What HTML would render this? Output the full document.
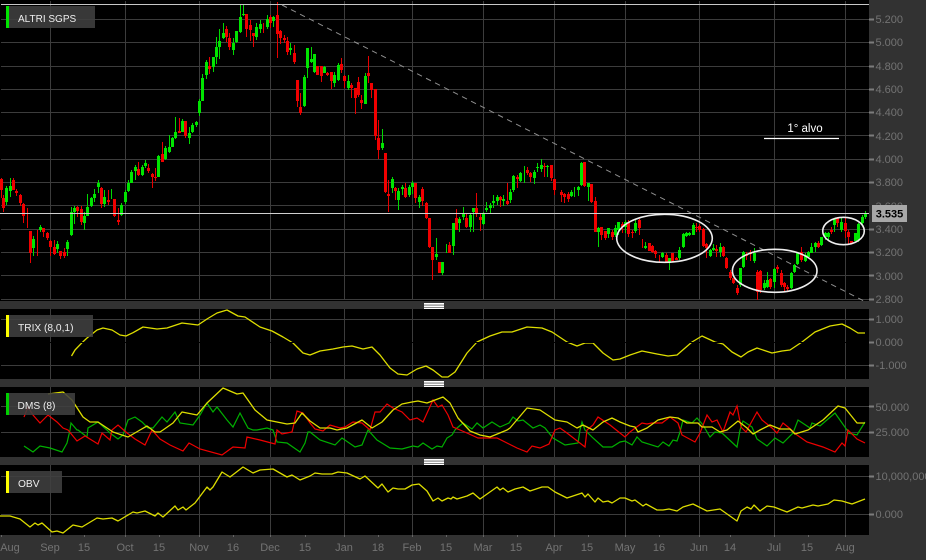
<!DOCTYPE html>
<html><head><meta charset="utf-8"><title>ALTRI SGPS</title>
<style>
html,body{margin:0;padding:0;background:#000;width:926px;height:560px;overflow:hidden}
svg{display:block}
text{font-family:"Liberation Sans",Arial,sans-serif}
.ax text{font-size:11px;fill:#737373}
.lb text{font-size:10.2px;fill:#eee}
</style></head><body>
<svg width="926" height="560" viewBox="0 0 926 560" xmlns="http://www.w3.org/2000/svg">
<rect width="926" height="560" fill="#000"/>
<!-- grid -->
<g stroke="#3c3c3c" stroke-width="1" fill="none">
<path d="M1 19.5H869M1 42.5H869M1 66.5H869M1 89.5H869M1 112.5H869M1 135.5H869M1 159.5H869M1 182.5H869M1 205.5H869M1 229.5H869M1 252.5H869M1 275.5H869M1 299.5H869"/>
<path d="M50.5 1V299M125.5 1V299M199.5 1V299M270.5 1V299M344.5 1V299M412.5 1V299M483.5 1V299M554.5 1V299M625.5 1V299M699.5 1V299M774.5 1V299M845.5 1V299"/>
<path d="M1 319.5H869M1 365.5H869"/>
<path d="M50.5 309V379M125.5 309V379M199.5 309V379M270.5 309V379M344.5 309V379M412.5 309V379M483.5 309V379M554.5 309V379M625.5 309V379M699.5 309V379M774.5 309V379M845.5 309V379"/>
<path d="M1 406.5H869M1 432.5H869"/>
<path d="M50.5 387V457M125.5 387V457M199.5 387V457M270.5 387V457M344.5 387V457M412.5 387V457M483.5 387V457M554.5 387V457M625.5 387V457M699.5 387V457M774.5 387V457M845.5 387V457"/>
<path d="M1 476.5H869M1 514.5H869"/>
<path d="M50.5 465V535M125.5 465V535M199.5 465V535M270.5 465V535M344.5 465V535M412.5 465V535M483.5 465V535M554.5 465V535M625.5 465V535M699.5 465V535M774.5 465V535M845.5 465V535"/>
</g>
<path d="M0 342.5H869" stroke="#000" stroke-width="1"/>
<!-- red wicks -->
<path fill="none" stroke="#e80000" stroke-width="1" d="M1.5 178V198M3.5 195V212M13.5 178V190M16.5 189V196M20.5 194V206M23.5 203V223M27.5 208V228M30.5 231V263M37.5 230V256M43.5 228V237M47.5 232V240M50.5 240V256M54.5 240V255M60.5 251V259M64.5 248V258M77.5 206V217M81.5 206V225M101.5 187V208M108.5 190V205M114.5 199V217M118.5 208V225M138.5 162V176M148.5 164V173M152.5 173V188M155.5 168V181M162.5 142V162M179.5 118V133M185.5 121V138M209.5 57V74M226.5 26V42M229.5 33V50M246.5 14V37M250.5 20V41M253.5 33V47M263.5 23V33M270.5 15V28M277.5 2V58M280.5 30V44M284.5 35V43M287.5 37V55M294.5 45V64M297.5 80V107M300.5 93V115M317.5 66V75M321.5 66V82M327.5 72V76M331.5 72V89M341.5 58V73M344.5 75V88M351.5 83V98M355.5 88V114M358.5 77V97M361.5 95V109M368.5 56V83M371.5 83V98M375.5 89V140M378.5 120V159M385.5 153V193M388.5 180V212M395.5 187V200M405.5 183V198M415.5 183V203M422.5 187V206M426.5 202V219M429.5 218V248M432.5 247V280M439.5 262V273M449.5 242V253M456.5 209V230M466.5 213V228M476.5 193V217M480.5 214V231M500.5 196V207M507.5 183V205M517.5 175V188M527.5 167V175M530.5 172V182M544.5 163V177M551.5 165V181M554.5 179V195M561.5 190V202M564.5 193V203M568.5 192V202M584.5 162V187M591.5 184V203M595.5 197V232M601.5 227V240M605.5 231V240M612.5 230V240M622.5 222V233M628.5 220V237M632.5 230V238M639.5 219V235M642.5 239V248M649.5 243V251M652.5 245V253M655.5 250V258M659.5 255V263M666.5 253V263M672.5 253V262M676.5 257V260M696.5 223V232M699.5 224V232M703.5 228V247M706.5 243V258M716.5 245V257M723.5 246V257M726.5 257V269M730.5 270V280M733.5 278V284M737.5 285V295M746.5 252V260M750.5 250V261M757.5 270V300M760.5 270V293M770.5 278V289M777.5 265V273M781.5 270V287M784.5 282V292M787.5 285V291M801.5 247V262M818.5 241V248M831.5 227V234M837.5 217V227M845.5 217V238M848.5 230V245M851.5 241V244"/>
<!-- red bodies -->
<path fill="none" stroke="#f00000" stroke-width="3" d="M1.5 179V190M3.5 198V208M13.5 180V190M16.5 191V193M20.5 195V203M23.5 204V216M30.5 231V253M43.5 228V232M47.5 233V238M50.5 241V247M54.5 247V254M60.5 251V256M64.5 252V256M77.5 207V211M81.5 209V222M101.5 188V204M108.5 200V202M114.5 199V216M118.5 220V222M138.5 169V175M148.5 168V171M152.5 174V177M155.5 177V178M162.5 154V162M179.5 131V133M185.5 121V136M209.5 66V69M226.5 29V37M229.5 38V47M246.5 14V29M250.5 25V30M253.5 33V36M270.5 17V23M277.5 15V34M280.5 31V38M284.5 38V40M287.5 41V52M294.5 53V62M297.5 80V101M300.5 107V113M317.5 66V75M321.5 66V76M327.5 73V75M331.5 72V81M341.5 64V70M344.5 76V81M351.5 85V88M355.5 88V98M358.5 82V95M361.5 100V103M368.5 73V76M371.5 83V90M375.5 89V136M378.5 138V150M385.5 153V192M388.5 194V196M395.5 188V191M405.5 188V197M415.5 183V198M422.5 189V201M426.5 203V218M429.5 218V247M432.5 247V260M439.5 262V273M449.5 245V253M456.5 218V230M466.5 218V227M476.5 208V214M480.5 217V220M500.5 197V200M507.5 201V204M517.5 177V179M527.5 170V173M530.5 173V177M544.5 166V167M551.5 165V178M554.5 179V190M561.5 192V195M564.5 194V197M568.5 194V199M584.5 162V186M591.5 184V202M595.5 201V232M601.5 227V235M605.5 231V238M612.5 232V237M622.5 224V227M628.5 223V234M632.5 232V233M639.5 220V228M649.5 243V251M652.5 246V252M655.5 251V254M666.5 255V262M672.5 253V261M676.5 258V260M696.5 227V228M699.5 226V230M703.5 229V246M706.5 244V248M716.5 249V251M723.5 247V256M726.5 258V268M730.5 272V278M733.5 278V283M737.5 288V293M746.5 254V256M750.5 252V254M757.5 272V292M760.5 271V290M770.5 279V287M777.5 267V269M781.5 273V285M784.5 283V287M787.5 287V289M801.5 252V260M818.5 243V247M831.5 230V232M837.5 218V223M845.5 223V231M848.5 232V237M851.5 241V244"/>
<!-- green wicks -->
<path fill="none" stroke="#00d800" stroke-width="1" d="M6.5 186V205M10.5 178V197M33.5 236V256M40.5 225V232M57.5 241V253M67.5 240V256M71.5 207V236M74.5 206V224M84.5 212V230M87.5 194V216M91.5 197V207M94.5 189V202M98.5 180V193M104.5 190V207M111.5 189V199M121.5 203V216M125.5 190V204M128.5 180V192M131.5 170V183M135.5 165V180M142.5 165V176M145.5 160V168M158.5 155V177M165.5 146V160M169.5 135V153M172.5 137V147M175.5 117V139M182.5 119V132M189.5 127V144M192.5 123V133M196.5 121V127M199.5 99V116M202.5 74V101M206.5 60V79M213.5 57V72M216.5 37V64M219.5 29V59M223.5 23V39M233.5 38V55M236.5 31V43M240.5 5V33M243.5 5V16M256.5 23V40M260.5 20V33M267.5 15V29M273.5 16V27M290.5 43V55M304.5 75V107M307.5 48V78M311.5 47V63M314.5 54V73M324.5 66V73M334.5 72V87M338.5 63V81M348.5 75V90M365.5 73V104M382.5 129V150M392.5 177V193M398.5 188V210M402.5 185V195M409.5 185V197M412.5 181V194M419.5 195V208M436.5 238V260M442.5 262V275M446.5 244V253M453.5 223V255M459.5 217V232M463.5 207V220M470.5 213V232M473.5 208V232M483.5 212V225M486.5 202V212M490.5 203V213M493.5 195V208M497.5 195V205M503.5 195V206M510.5 189V203M513.5 175V192M520.5 172V182M524.5 166V183M534.5 170V184M537.5 163V172M541.5 159V172M547.5 165V177M571.5 190V197M574.5 187V197M578.5 186V196M581.5 162V186M588.5 183V201M598.5 227V247M608.5 228V238M615.5 225V237M618.5 222V235M625.5 220V233M635.5 220V233M645.5 242V249M662.5 252V258M669.5 258V270M679.5 247V260M683.5 233V248M686.5 232V237M689.5 232V236M693.5 223V235M710.5 249V257M713.5 244V251M720.5 243V257M740.5 268V287M743.5 251V268M754.5 248V263M764.5 280V290M767.5 272V288M774.5 268V288M791.5 272V289M794.5 264V273M797.5 252V265M805.5 253V262M808.5 251V258M811.5 243V253M815.5 242V252M821.5 237V246M825.5 232V240M828.5 232V241M834.5 218V232M841.5 218V232M855.5 233V241M858.5 223V242M862.5 215V225M865.5 211V219"/>
<!-- green bodies -->
<path fill="none" stroke="#00e400" stroke-width="3" d="M6.5 188V202M10.5 186V191M33.5 239V248M40.5 227V230M57.5 244V249M67.5 242V249M71.5 212V235M74.5 208V212M84.5 216V223M87.5 207V216M91.5 198V206M94.5 194V198M98.5 183V187M104.5 197V204M121.5 205V215M125.5 192V202M128.5 183V191M131.5 172V183M135.5 167V171M142.5 167V175M145.5 163V166M158.5 156V177M165.5 148V159M169.5 147V152M172.5 138V147M175.5 132V138M182.5 121V132M189.5 133V138M192.5 125V132M196.5 122V125M199.5 101V113M202.5 78V101M206.5 62V75M213.5 57V67M216.5 47V57M219.5 41V47M223.5 33V38M233.5 43V50M236.5 31V42M240.5 17V32M243.5 14V15M256.5 27V37M260.5 24V29M267.5 19V27M273.5 17V21M290.5 48V50M304.5 77V106M307.5 48V68M311.5 59V62M314.5 54V72M324.5 67V73M334.5 75V83M338.5 65V80M348.5 81V88M365.5 76V104M382.5 143V148M392.5 179V188M398.5 191V200M402.5 187V189M409.5 187V195M412.5 183V187M419.5 197V202M436.5 254V257M442.5 262V273M453.5 223V246M459.5 219V223M463.5 214V217M470.5 215V227M473.5 208V212M483.5 213V224M486.5 208V210M490.5 205V208M493.5 201V203M497.5 197V201M503.5 199V201M510.5 192V200M513.5 176V190M520.5 173V181M534.5 172V178M537.5 167V168M541.5 165V169M547.5 166V167M571.5 192V196M578.5 187V190M581.5 163V185M588.5 183V187M598.5 228V232M608.5 228V234M615.5 228V235M618.5 222V230M625.5 222V227M635.5 223V231M645.5 246V248M662.5 253V257M669.5 258V263M679.5 250V258M683.5 234V247M686.5 233V236M689.5 233V235M693.5 225V235M710.5 250V256M713.5 248V250M720.5 247V252M740.5 268V285M743.5 252V267M754.5 253V261M764.5 283V288M767.5 280V287M774.5 269V282M791.5 273V288M794.5 265V272M797.5 253V264M805.5 255V261M808.5 252V257M811.5 247V253M815.5 243V247M821.5 237V245M825.5 233V237M828.5 233V237M834.5 219V225M841.5 222V230M855.5 233V241M858.5 224V240M862.5 217V223M865.5 213V217"/>
<!-- top & price lines -->
<path d="M1 4.5H869" stroke="#c8c8c8" stroke-width="1"/>
<path d="M0 213.5H872" stroke="#d0d0d0" stroke-width="1"/>
<path d="M282 5L866 302" stroke="#8f8f8f" stroke-width="1" stroke-dasharray="5.5 4.6" fill="none"/>
<!-- ellipses & target -->
<g fill="none" stroke="#eee" stroke-width="1.6">
<ellipse cx="664.5" cy="238.3" rx="47.8" ry="24"/>
<ellipse cx="774.7" cy="270.8" rx="42.3" ry="21.5"/>
<ellipse cx="843.5" cy="231" rx="20.8" ry="13.7"/>
</g>
<path d="M764 138.5H839" stroke="#fff" stroke-width="1.2"/>
<text x="805" y="132" font-size="11.5" fill="#fff" text-anchor="middle">1° alvo</text>
<!-- bands -->
<g fill="#323232">
<rect x="0" y="301" width="926" height="8"/>
<rect x="0" y="379" width="926" height="8"/>
<rect x="0" y="457" width="926" height="8"/>
<rect x="0" y="535" width="926" height="25"/>
<rect x="869" y="0" width="57" height="560"/>
</g>
<g fill="#fff">
<rect x="424" y="303" width="20" height="1.7"/><rect x="424" y="305.4" width="20" height="1.6"/><rect x="424" y="307.6" width="20" height="1.4"/>
<rect x="424" y="381" width="20" height="1.7"/><rect x="424" y="383.4" width="20" height="1.6"/><rect x="424" y="385.6" width="20" height="1.4"/>
<rect x="424" y="459" width="20" height="1.7"/><rect x="424" y="461.4" width="20" height="1.6"/><rect x="424" y="463.6" width="20" height="1.4"/>
</g>
<!-- TRIX -->
<polyline fill="none" stroke="#dede00" stroke-width="1.3" stroke-linejoin="round" points="71.5,356 75,350 82,342.7 87,338 97,330 103,328 112,330 120,335 126,336 133,332.7 143,327 157,329 167,328 182,323 198,325 207,319 217,313 227,310 238,316 245,317 260,327 272,331 283,337 293,343 303,353 310,355 320,351 333,349 343,347 352,346 363,349 372,347 380,355 390,368 398,374 407,375 417,369 426,366 433,370 442,377 448,377 455,372 467,353 477,342 490,336 502,332 512,332 527,327 542,328 552,332 567,342 577,346 585,343 593,343 603,353 613,360 620,359 630,355 642,351 657,354 668,356 677,355 692,342 702,336 715,342 723,344 732,352 741,357 748,352 757,348 772,353 782,351 790,350 802,342 815,332 830,326 842,324 850,328 858,333 865,333"/>
<path d="M0 342.5H869" stroke="#000" stroke-width="1"/>
<!-- DMS -->
<polyline fill="none" stroke="#00b000" stroke-width="1.2" points="24,446 33,452 40,446 50,448 62,452 67,443 70,430 71,423 77,430 78,430 87,437 88,428 98,422 107,430 110,433 118,439 123,435 128,420 135,417 142,422 148,428 153,428 162,417 167,422 175,412 180,423 193,425 200,415 207,403 213,412 217,407 227,420 233,427 240,413 248,428 253,430 257,430 267,428 273,430 277,442 287,443 300,452 305,443 308,432 310,432 320,440 335,445 342,438 355,447 362,445 368,430 377,440 390,448 402,449 413,446 418,447 423,443 432,449 437,446 442,447 447,438 452,435 455,430 457,428 463,423 472,429 477,423 483,428 492,422 500,427 509,423 513,417 518,421 523,420 533,428 540,425 545,428 553,438 565,445 578,443 580,430 582,422 585,430 593,438 603,447 612,447 620,442 625,441 632,445 637,437 642,442 658,447 663,442 669,446 673,440 677,441 680,432 683,420 692,423 697,418 703,425 710,437 715,432 722,433 737,447 740,430 743,421 752,427 757,439 767,446 775,438 783,443 793,433 798,420 810,428 812,423 820,426 835,413 847,430 848,433 857,435 865,422"/>
<polyline fill="none" stroke="#f00000" stroke-width="1.2" points="24,417 28,407 33,415 40,423 48,415 57,422 63,428 68,430 77,441 85,436 98,444 102,433 110,440 112,430 118,425 127,433 135,439 145,445 152,430 160,439 170,445 183,451 189,443 200,449 222,455 233,447 245,448 247,437 260,440 275,444 277,430 282,434 292,432 297,411 303,413 310,423 315,429 323,431 330,425 340,428 345,427 353,422 362,423 370,430 375,412 380,412 387,404 393,408 402,412 410,420 417,418 423,422 433,400 438,407 442,405 448,415 453,427 460,430 467,433 478,438 497,438 517,448 527,452 532,446 540,448 549,444 555,430 560,428 567,433 585,447 587,430 593,425 598,417 610,425 620,433 625,437 630,432 642,423 647,424 652,423 662,423 670,417 678,423 682,435 695,442 700,433 707,415 712,422 717,420 723,432 730,412 733,415 737,406 741,427 746,432 757,412 762,420 772,428 777,433 783,423 788,427 797,435 807,442 823,447 835,452 842,443 845,446 848,430 857,439 865,443"/>
<polyline fill="none" stroke="#dede00" stroke-width="1.3" stroke-linejoin="round" points="48,394 63,392 72,400 83,417 90,422 98,422 107,428 113,432 128,437 140,430 147,426 155,432 160,432 163,430 173,423 182,412 197,415 207,403 223,388 237,394 243,393 255,410 267,420 287,424 295,423 302,413 310,421 320,428 330,428 337,430 347,428 362,420 372,428 382,422 393,410 402,404 412,402 418,401 427,403 443,397 450,403 458,418 470,431 480,435 490,437 507,430 510,428 527,408 540,410 555,420 567,422 577,428 583,425 593,430 603,422 612,418 620,422 630,426 635,427 638,432 647,428 658,420 670,417 678,418 687,423 698,423 702,427 712,427 720,432 727,430 738,421 747,428 753,434 760,430 770,425 780,429 790,429 795,434 808,430 823,420 838,406 845,408 857,423 865,423"/>
<!-- OBV -->
<polyline fill="none" stroke="#dcdc00" stroke-width="1.3" stroke-linejoin="round" points="0,516 10,516 20,519 30,527 35,523 38,525 42,523 52,532 57,531 63,533 73,525 82,527 97,518 103,519 112,518 118,521 133,512 137,513 145,511 155,516 158,513 163,517 175,506 178,510 183,507 186,510 195,503 207,487 210,490 213,487 222,472 230,477 243,467 253,473 260,470 273,469 287,477 292,475 300,480 310,476 315,473 322,474 332,474 338,472 347,473 360,479 365,476 378,488 382,484 388,492 393,488 398,489 405,489 412,485 419,484 427,491 433,501 438,498 442,501 448,498 451,499 453,497 457,499 467,496 473,493 480,499 497,487 500,490 503,488 508,492 515,489 523,487 530,491 542,487 548,487 555,492 567,498 582,493 585,497 588,494 595,502 598,498 603,502 608,501 612,503 620,498 625,498 632,501 635,500 643,506 646,504 657,510 663,510 669,509 677,511 683,507 693,504 707,511 720,509 737,521 741,511 747,507 751,509 754,505 760,511 767,506 774,507 787,512 798,507 802,508 813,505 818,506 828,504 834,500 842,501 852,504 865,499"/>
<!-- labels -->
<g fill="#404040" fill-opacity=".88">
<rect x="9" y="6" width="86" height="22"/>
<rect x="9" y="315" width="84" height="22"/>
<rect x="9" y="393" width="66" height="22"/>
<rect x="9" y="471" width="53" height="22"/>
</g>
<rect x="6" y="6" width="3" height="22" fill="#00e400"/>
<rect x="6" y="315" width="3" height="22" fill="#ffff00"/>
<rect x="6" y="393" width="3" height="22" fill="#00d000"/>
<rect x="6" y="471" width="3" height="22" fill="#ffff00"/>
<g class="lb">
<text x="18" y="22" style="font-size:10px">ALTRI SGPS</text>
<text x="18" y="331">TRIX (8,0,1)</text>
<text x="17.5" y="409">DMS (8)</text>
<text x="18" y="487">OBV</text>
</g>
<!-- axis ticks -->
<g stroke="#7c7c7c" stroke-width="2">
<path d="M869 19.5h5M869 42.5h5M869 66.5h5M869 89.5h5M869 112.5h5M869 135.5h5M869 159.5h5M869 182.5h5M869 229.5h5M869 252.5h5M869 275.5h5M869 299.5h5M869 319.5h5M869 342.5h5M869 365.5h5M869 406.5h5M869 432.5h5M869 476.5h5M869 514.5h5"/>
</g>
<g stroke="#666" stroke-width="1">
<path d="M1.5 535v2M50.5 535v2M84.5 535v2M125.5 535v2M159.5 535v2M199.5 535v2M233.5 535v2M270.5 535v2M305.5 535v2M344.5 535v2M378.5 535v2M412.5 535v2M446.5 535v2M483.5 535v2M517.5 535v2M554.5 535v2M588.5 535v2M625.5 535v2M659.5 535v2M699.5 535v2M730.5 535v2M774.5 535v2M808.5 535v2M845.5 535v2"/>
</g>
<g class="ax">
<text x="875.5" y="23">5.200</text><text x="875.5" y="46">5.000</text><text x="875.5" y="70">4.800</text><text x="875.5" y="93">4.600</text><text x="875.5" y="116">4.400</text><text x="875.5" y="140">4.200</text><text x="875.5" y="163">4.000</text><text x="875.5" y="186">3.800</text><text x="875.5" y="210">3.600</text><text x="875.5" y="233">3.400</text><text x="875.5" y="256">3.200</text><text x="875.5" y="280">3.000</text><text x="875.5" y="303">2.800</text>
<text x="875.5" y="323">1.000</text><text x="875.5" y="346">0.000</text><text x="875.5" y="369">-1.000</text>
<text x="875.5" y="411">50.000</text><text x="875.5" y="436">25.000</text>
<text x="875.5" y="480">10,000,000</text><text x="875.5" y="518">0.000</text>
</g>
<g class="ax" text-anchor="middle">
<text x="10" y="551">Aug</text><text x="50" y="551">Sep</text><text x="84" y="551">15</text><text x="125" y="551">Oct</text><text x="159" y="551">15</text><text x="199" y="551">Nov</text><text x="233" y="551">16</text><text x="270" y="551">Dec</text><text x="305" y="551">15</text><text x="344" y="551">Jan</text><text x="378" y="551">18</text><text x="412" y="551">Feb</text><text x="446" y="551">15</text><text x="483" y="551">Mar</text><text x="516" y="551">15</text><text x="554" y="551">Apr</text><text x="587" y="551">15</text><text x="625" y="551">May</text><text x="659" y="551">16</text><text x="699" y="551">Jun</text><text x="730" y="551">14</text><text x="774" y="551">Jul</text><text x="807" y="551">15</text><text x="845" y="551">Aug</text>
</g>
<!-- price tag -->
<rect x="872" y="205" width="35" height="17" fill="#a8a8a8"/>
<text x="889.5" y="217.5" font-size="11" font-weight="bold" fill="#000" text-anchor="middle">3.535</text>
</svg>
</body></html>
